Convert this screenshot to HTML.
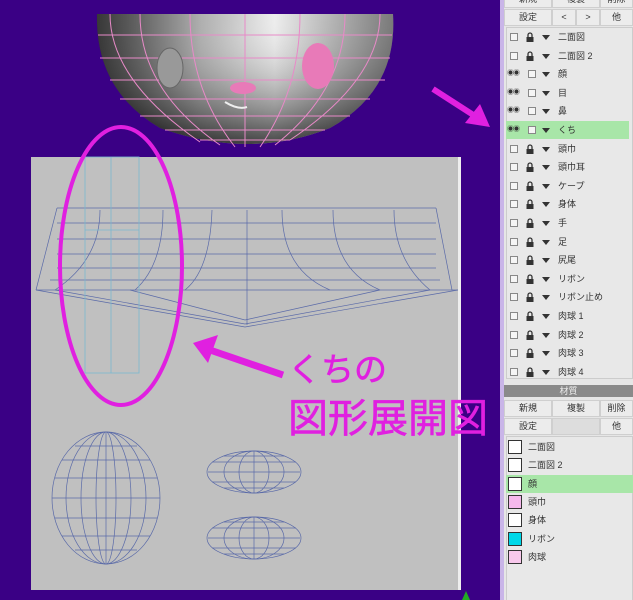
<!DOCTYPE html>
<html><head><meta charset="utf-8"><style>
*{margin:0;padding:0;box-sizing:border-box}
html,body{width:633px;height:600px}
body{background:#3a0085;position:relative;overflow:hidden;font-family:"Liberation Sans","Noto Sans CJK JP",sans-serif}
.panel{position:absolute;left:500px;top:0;width:133px;height:600px;background:#c9b5e8}
.inner{position:absolute;left:4px;top:0;width:129px;height:600px;background:#e6e6e6}
.btn{position:absolute;height:17px;background:#ececec;border:1px solid #cfcfcf;font-size:9px;color:#333;text-align:center;line-height:15px}
.row{position:absolute;left:6px;width:123px;height:18px;font-size:9px;color:#333;line-height:18px}
.row.sel{background:#a8e6a8}
.cb{position:absolute;top:5px;width:8px;height:8px;border:1px solid #888;background:#f5f5f5}
.lk{position:absolute;left:20px;top:4px;width:8px;height:10px}
.tri{position:absolute;left:36px;top:7px;width:0;height:0;border-left:4px solid transparent;border-right:4px solid transparent;border-top:5px solid #333}
.eye{position:absolute;left:1px;top:4px;font-size:7px;line-height:10px;letter-spacing:-1px}
.lbl{position:absolute;left:52px}
.sw{position:absolute;left:2px;top:2px;width:14px;height:14px;border:1.5px solid #333;background:#fff}
.ml{position:absolute;left:22px}
</style></head><body>
<svg width="633" height="600" style="position:absolute;left:0;top:0">
<defs>
<linearGradient id="g" x1="0" x2="1" y1="0" y2="0">
<stop offset="0" stop-color="#111"/><stop offset=".35" stop-color="#aaa"/><stop offset=".6" stop-color="#eee"/><stop offset="1" stop-color="#777"/></linearGradient>
<radialGradient id="g2" cx=".5" cy="0" r="1"><stop offset="0" stop-color="#fff" stop-opacity="0"/><stop offset="1" stop-color="#000" stop-opacity=".7"/></radialGradient>
</defs>
<rect x="31" y="157" width="430" height="433" fill="#c0c0c0"/>
<rect x="458" y="157" width="3" height="433" fill="#eee"/>
<path d="M97 14 L393 14 Q398 90 330 128 Q250 160 160 128 Q95 90 97 14Z" fill="url(#g)"/>
<path d="M97 14 L393 14 Q398 90 330 128 Q250 160 160 128 Q95 90 97 14Z" fill="url(#g2)"/>
<g stroke="#e88ac8" stroke-width="1" fill="none">
<path d="M98 35 H392 M100 58 H390 M110 80 H385 M120 99 H370 M140 116 H350 M165 130 H325 M200 140 H290"/>
<path d="M110 14 Q110 80 200 142 M140 14 Q140 90 220 145 M190 14 Q190 90 235 147 M245 14 V147 M300 14 Q300 90 260 147 M345 14 Q345 90 275 145 M380 14 Q380 80 290 140"/>
</g>
<ellipse cx="170" cy="68" rx="13" ry="20" fill="#999" stroke="#666"/>
<ellipse cx="318" cy="66" rx="16" ry="23" fill="#e87ab8"/>
<ellipse cx="243" cy="88" rx="13" ry="6" fill="#e87ab8"/>
<path d="M225 102 Q238 110 247 107" stroke="#eee" stroke-width="2" fill="none"/>
<g stroke="#5a6aa8" stroke-width=".7" fill="none">
<path d="M57 208 H436 M57 223 H436 M57 239 H436 M57 254 H436 M57 268 H436 M50 280 H440"/>
<path d="M36 290 L57 208 M452 290 L436 208 M36 290 H458"/>
<path d="M36 290 L245 327 L458 290 M55 290 L245 324 L430 290 M130 290 L245 320 L380 290"/>
<path d="M100 210 Q100 260 55 290 M163 210 Q163 265 135 290 M212 210 Q210 270 185 290 M247 210 V325 M282 210 Q282 270 330 290 M333 210 Q333 270 380 290 M394 210 Q394 260 430 290"/>
</g>
<g stroke="#7ab8d0" stroke-width=".8" fill="none">
<rect x="85" y="157" width="54" height="216"/><line x1="111" y1="157" x2="111" y2="373"/><line x1="85" y1="230" x2="139" y2="230"/>
</g>
<g stroke="#5a6aa8" stroke-width=".7" fill="none">
<ellipse cx="106" cy="498" rx="54" ry="66"/><ellipse cx="106" cy="498" rx="40" ry="66"/><ellipse cx="106" cy="498" rx="25" ry="66"/><ellipse cx="106" cy="498" rx="10" ry="66"/><line x1="106" y1="432" x2="106" y2="564"/>
<path d="M62 460 H150 M55 478 H157 M52 498 H160 M55 518 H157 M62 536 H150 M75 550 H137 M75 446 H137"/>
<ellipse cx="254" cy="472" rx="47" ry="21"/><ellipse cx="254" cy="472" rx="30" ry="21"/><ellipse cx="254" cy="472" rx="15" ry="21"/>
<path d="M212 462 H296 M208 472 H300 M212 482 H296 M224 456 H284 M224 488 H284 M254 451 V493"/>
<ellipse cx="254" cy="538" rx="47" ry="21"/><ellipse cx="254" cy="538" rx="30" ry="21"/><ellipse cx="254" cy="538" rx="15" ry="21"/>
<path d="M212 528 H296 M208 538 H300 M212 548 H296 M224 522 H284 M224 554 H284 M254 517 V559"/>
</g>
<ellipse cx="121" cy="266" rx="61" ry="139" stroke="#e020e0" stroke-width="4" fill="none"/>
<path d="M283 375 L210 350" stroke="#e020e0" stroke-width="7"/>
<path d="M193 343 L218 335 L208 363Z" fill="#e020e0"/>
<path d="M433 89 L478 118" stroke="#e020e0" stroke-width="6"/>
<path d="M490 127 L465 123 L480 104Z" fill="#e020e0"/>
<text x="288" y="381" font-size="33" fill="#e020e0" stroke="#e020e0" stroke-width=".6" font-family="Liberation Sans,Noto Sans CJK JP,sans-serif">くちの</text>
<text x="288" y="432" font-size="40" fill="#e020e0" stroke="#e020e0" stroke-width=".6" font-family="Liberation Sans,Noto Sans CJK JP,sans-serif">図形展開図</text>
<path d="M466 591 L470 600 L462 600Z" fill="#2a2"/>
</svg>
<div class="panel"><div class="inner">
<div class="btn" style="left:0;top:-9px;width:48px">新規</div><div class="btn" style="left:48px;top:-9px;width:48px">複製</div><div class="btn" style="left:96px;top:-9px;width:33px">削除</div>
<div class="btn" style="left:0;top:9px;width:48px">設定</div><div class="btn" style="left:48px;top:9px;width:24px">&lt;</div><div class="btn" style="left:72px;top:9px;width:24px">&gt;</div><div class="btn" style="left:96px;top:9px;width:33px">他</div>
<div style="position:absolute;left:2px;top:27px;width:127px;height:352px;border:1px solid #ccc;background:#e8e8e8"></div>
</div></div>
<div style="position:absolute;left:504px;top:385px;width:129px;height:12px;background:#8a8a8a;color:#eee;font-size:9px;text-align:center;line-height:12px">材質</div>
<div style="position:absolute;left:504px;top:397px;width:129px;height:203px;overflow:hidden">
<div class="btn" style="left:0;top:3px;width:48px">新規</div><div class="btn" style="left:48px;top:3px;width:48px">複製</div><div class="btn" style="left:96px;top:3px;width:33px">削除</div>
<div class="btn" style="left:0;top:21px;width:48px">設定</div><div class="btn" style="left:48px;top:21px;width:48px;background:#ddd"></div><div class="btn" style="left:96px;top:21px;width:33px">他</div>
<div style="position:absolute;left:2px;top:39px;width:127px;height:170px;border:1px solid #ccc;background:#e8e8e8"></div>
</div>
<div id="list"></div>
<script>
var L=[["二面図",0],["二面図 2",0],["顔",1],["目",1],["鼻",1],["くち",1,1],["頭巾",0],["頭巾耳",0],["ケープ",0],["身体",0],["手",0],["足",0],["尻尾",0],["リボン",0],["リボン止め",0],["肉球 1",0],["肉球 2",0],["肉球 3",0],["肉球 4",0]];
var h="";L.forEach(function(r,i){var y=28+i*18.6;
h+='<div class="row'+(r[2]?' sel':'')+'" style="left:506px;top:'+y+'px">'+(r[1]?'<span class="eye">◉◉</span><div class="cb" style="left:22px"></div>':'<div class="cb" style="left:4px"></div><svg class="lk" viewBox="0 0 8 10"><path d="M2 5V3a2 2 0 0 1 4 0v2" stroke="#333" stroke-width="1.3" fill="none"/><rect x="0.5" y="5" width="7" height="5" fill="#333"/></svg>')+'<div class="tri"></div><span class="lbl">'+r[0]+'</span></div>';});
var M=[["二面図","#fff"],["二面図 2","#fff"],["顔","#fff",1],["頭巾","#f5b8ec"],["身体","#fff"],["リボン","#00d8e8"],["肉球","#f8c8ec"]];
M.forEach(function(r,i){var y=438+i*18.3;
h+='<div class="row'+(r[2]?' sel':'')+'" style="left:506px;width:127px;top:'+y+'px"><div class="sw" style="background:'+r[1]+'"></div><span class="ml">'+r[0]+'</span></div>';});
document.getElementById("list").innerHTML=h;
</script>
</body></html>
